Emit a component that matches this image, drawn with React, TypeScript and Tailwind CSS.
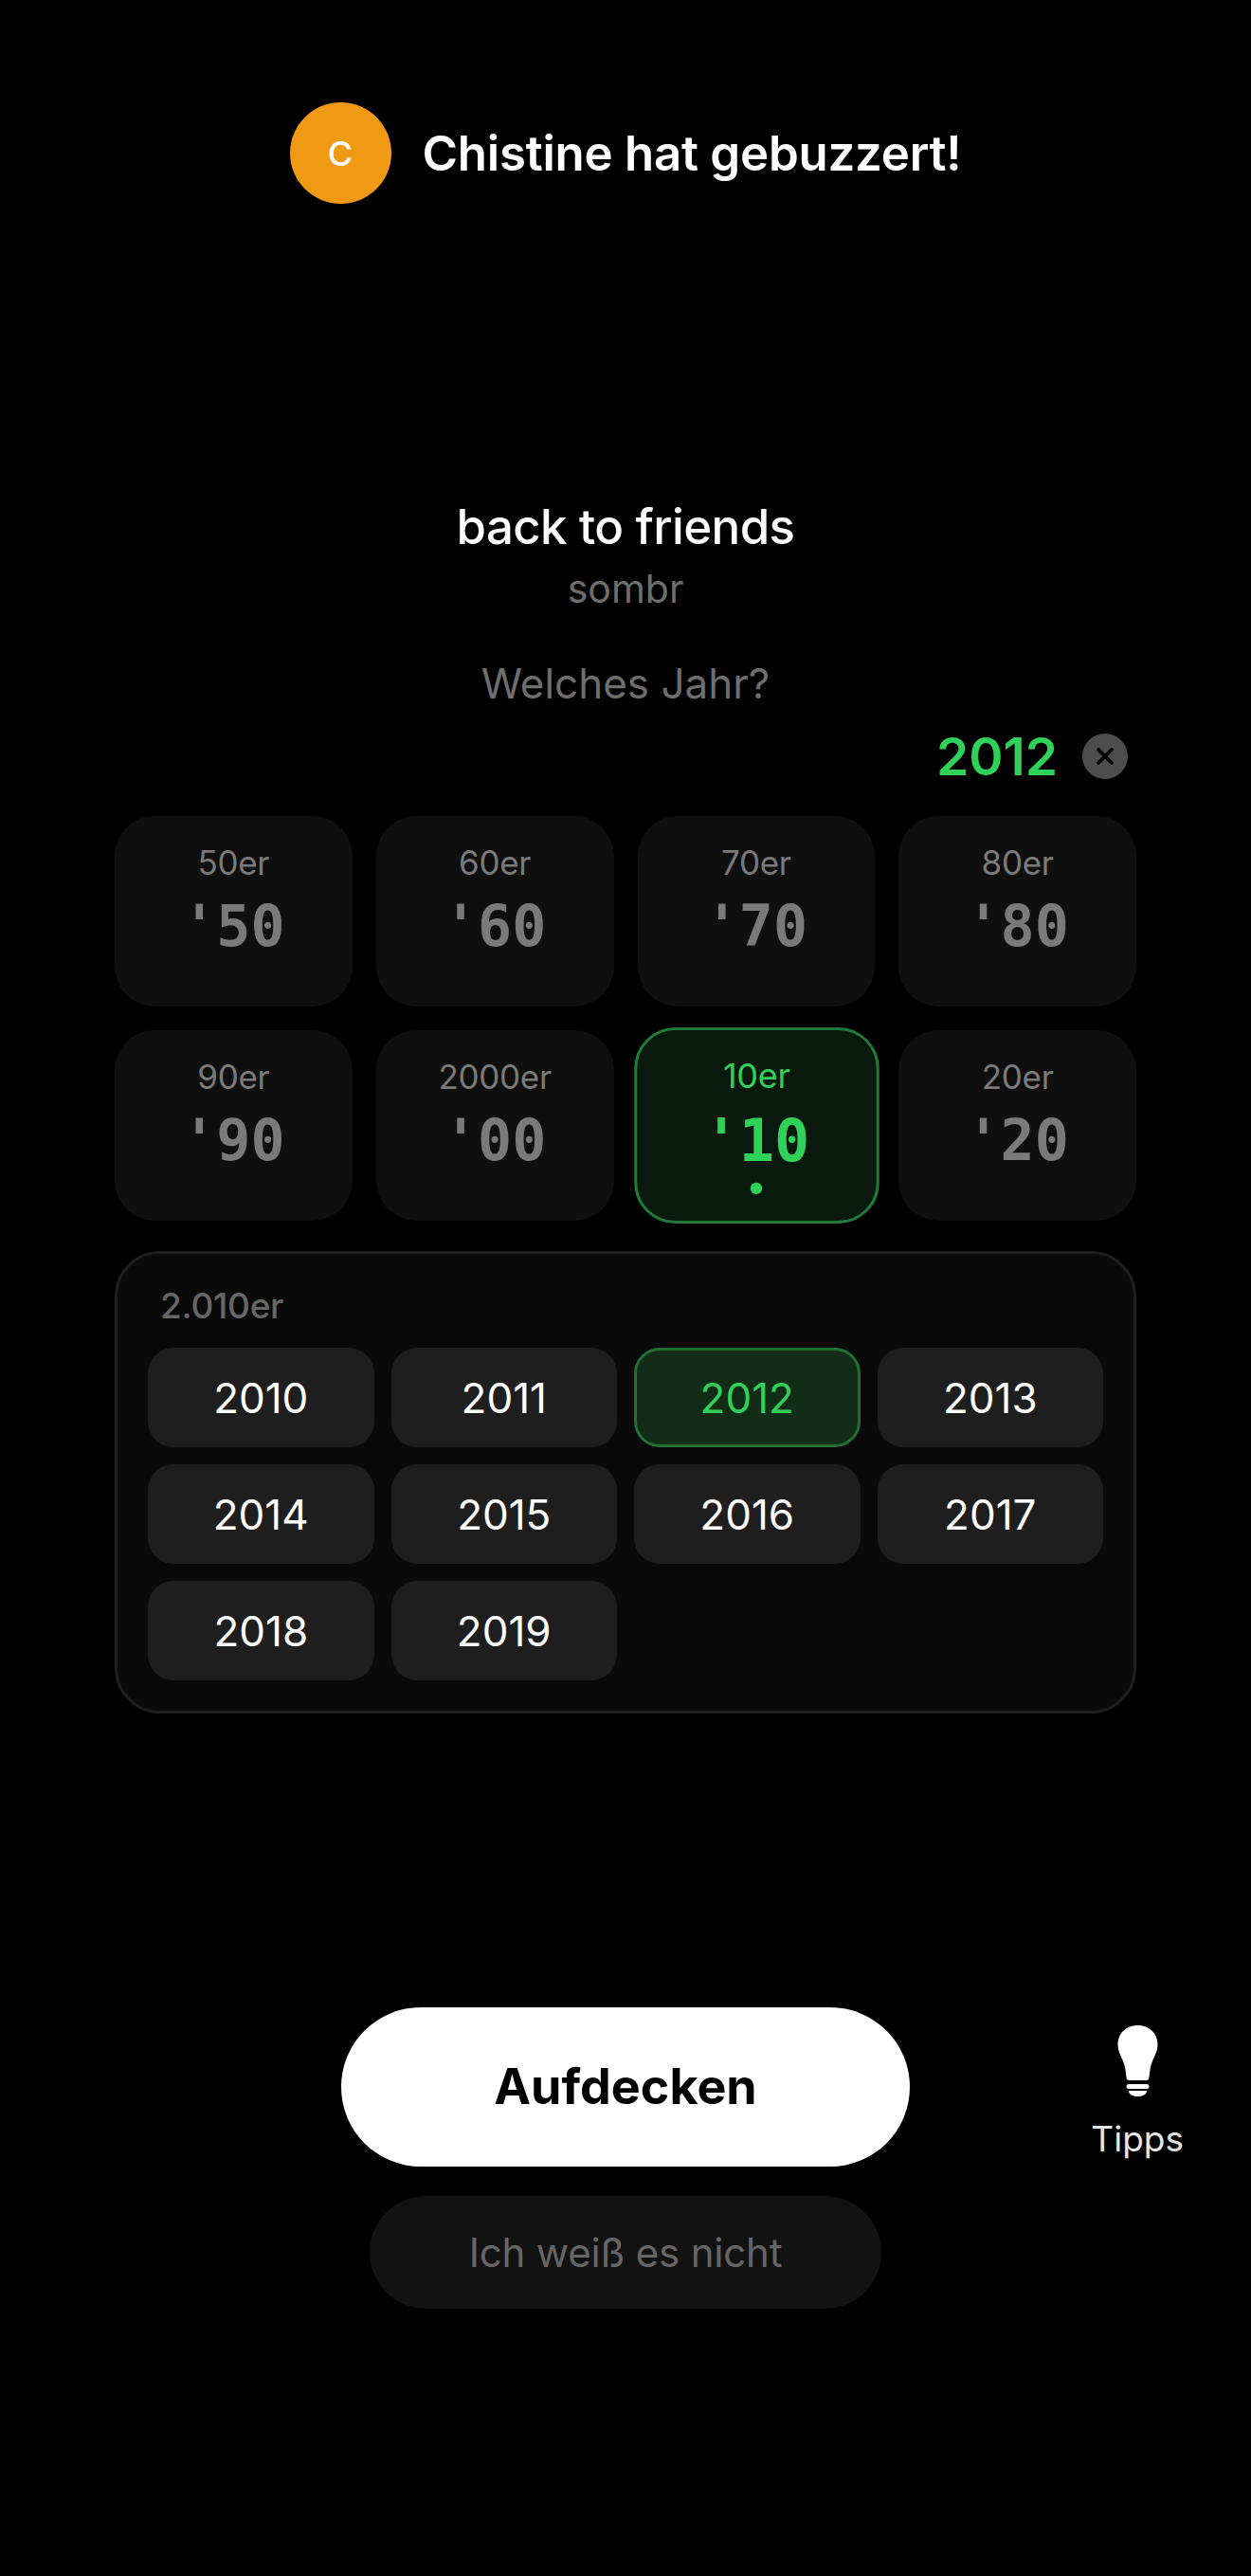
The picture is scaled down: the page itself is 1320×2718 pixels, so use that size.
const sans = "font-['Inter',_'Liberation_Sans',_sans-serif]";

const decades = [
  { label: '50er', short: "'50" },
  { label: '60er', short: "'60" },
  { label: '70er', short: "'70" },
  { label: '80er', short: "'80" },
  { label: '90er', short: "'90" },
  { label: '2000er', short: "'00" },
  { label: '10er', short: "'10", active: true },
  { label: '20er', short: "'20" },
];

const years = ['2010', '2011', '2012', '2013', '2014', '2015', '2016', '2017', '2018', '2019'];

const DecadeCard = ({ label, short, active }: { label: string; short: string; active?: boolean }) => {
  return (
    <div
      className={
        active
          ? 'relative h-[201px] rounded-[42px] border-[3px] border-[#1f7a38] bg-[#09190d] scale-[1.03] flex flex-col items-center pt-[24px] text-[#30d158]'
          : 'relative h-[201px] rounded-[42px] bg-[#0f0f0f] flex flex-col items-center pt-[27px] text-[#7a7a7a]'
      }
    >
      <span className="text-[35px] leading-[44px] tracking-[-0.3px]">{label}</span>
      <span className="mt-[10px] font-['DejaVu_Sans_Mono',_monospace] font-bold text-[60px] leading-[70px]">{short}</span>
      {active && <span className="absolute bottom-[27px] w-[12px] h-[12px] rounded-full bg-[#30d158]"></span>}
    </div>
  );
};

const App = () => {
  return (
    <div className={`${sans} w-[1320px] h-[2718px] bg-black text-white flex flex-col`}>
      {/* Buzzer header */}
      <div className="pt-[108px] flex items-center justify-center gap-[33px]">
        <div className="w-[107px] h-[107px] rounded-full bg-[#f09a14] flex items-center justify-center text-[36px] font-medium">C</div>
        <h1 className="text-[51px] leading-[60px] font-semibold tracking-[-0.25px]">Chistine hat gebuzzert!</h1>
      </div>

      {/* Song */}
      <div className="mt-[311px] flex flex-col items-center">
        <div className="text-[51px] leading-[60px] font-medium tracking-[-0.6px]">back to friends</div>
        <div className="mt-[10px] text-[41px] leading-[50px] text-[#6e6e6e]">sombr</div>
        <div className="mt-[50px] text-[44px] leading-[50px] text-[#6e6e6e]">Welches Jahr?</div>
      </div>

      {/* Current guess */}
      <div className="mt-[28px] px-[130px] flex items-center justify-end gap-[26px]">
        <span className="text-[55px] leading-[48px] font-semibold text-[#30d158]">2012</span>
        <div className="w-[48px] h-[48px] rounded-full bg-[#4d4d4d] flex items-center justify-center">
          <svg width="24" height="24" viewBox="0 0 24 24" fill="none" stroke="#000" strokeWidth="3.6" strokeLinecap="round">
            <path d="M5 5l14 14M19 5L5 19" />
          </svg>
        </div>
      </div>

      {/* Decades */}
      <div className="mt-[39px] px-[121px] grid grid-cols-4 gap-[25px]">
        {decades.map((d) => (
          <DecadeCard key={d.label} {...d} />
        ))}
      </div>

      {/* Years panel */}
      <div className="mt-[32px] mx-[121px] rounded-[48px] border-[3px] border-[#1f1f1f] bg-[#0a0a0a] px-[32px] pt-[33px] pb-[32px]">
        <div className="pl-[13px] text-[37px] leading-[44px] font-medium tracking-[-0.3px] text-[#666666]">2.010er</div>
        <div className="mt-[22px] grid grid-cols-4 gap-[18px]">
          {years.map((y) =>
            y === '2012' ? (
              <div key={y} className="h-[105px] rounded-[27px] border-[3px] border-[#226f35] bg-[#132c18] flex items-center justify-center text-[44px] text-[#30d158]">
                {y}
              </div>
            ) : (
              <div key={y} className="h-[105px] rounded-[27px] bg-[#1e1e1e] flex items-center justify-center text-[44px]">
                {y}
              </div>
            )
          )}
        </div>
      </div>

      {/* Actions */}
      <div className="mt-[310px] grid grid-cols-[1fr_600px_1fr]">
        <div></div>
        <div className="h-[168px] rounded-[84px] bg-white text-black flex items-center justify-center text-[52px] font-bold">Aufdecken</div>
        <div className="pt-[19px] pr-[71px] flex flex-col items-end">
          <div className="flex flex-col items-center gap-[23px]">
            <svg width="43" height="75" viewBox="0 0 43 75" fill="#fff">
              <path d="M21.500 0C9.500 0 .500 8.500 .500 20c0 6.500 2.500 11 5 16.500 2.500 5.500 3.500 12 4 18.500.200 2 1 3 3 3h18c2 0 2.800-1 3-3 .500-6.500 1.500-13 4-18.500 2.500-5.500 5-10 5-16.500C42.500 8.500 33.500 0 21.500 0z" />
              <rect x="9.500" y="62" width="24" height="5" rx="2.500" />
              <path d="M12 69h19c0 3.500-3.500 6-9.500 6S12 72.500 12 69z" />
            </svg>
            <span className="text-[37px] leading-[44px] text-[#e5e5e5]">Tipps</span>
          </div>
        </div>
      </div>
      <div className="mt-[31px] mx-auto w-[540px] h-[119px] rounded-[60px] bg-[#121212] flex items-center justify-center text-[42px] tracking-[-0.2px] text-[#666666]">
        Ich weiß es nicht
      </div>
    </div>
  );
};

export default App;
